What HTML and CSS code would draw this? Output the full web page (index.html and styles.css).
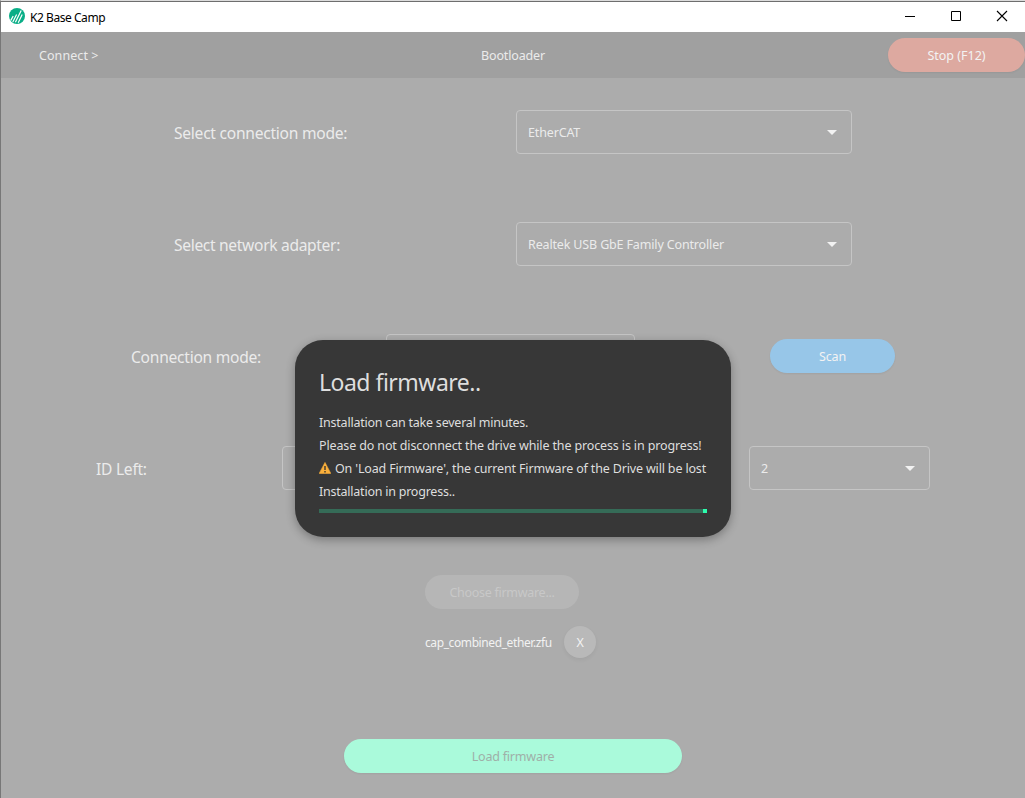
FILE: index.html
```html
<!DOCTYPE html>
<html lang="en">
<head>
<meta charset="utf-8">
<title>K2 Base Camp</title>
<link rel="stylesheet" href="styles.css">
</head>
<body>
<div class="window">
  <header class="titlebar">
    <svg class="logo" viewBox="0 0 16 16" width="16" height="16"><circle cx="8" cy="8" r="8" fill="#0aae87"/><path d="M1.8 12.4 4.2 8M3.8 14 7.6 6.4M6.4 14.2 12.2 2.4M9.2 14.8 13.2 6.6" stroke="#fff" stroke-width="1.2" fill="none"/></svg>
    <span class="app-name">K2 Base Camp</span>
    <div class="controls">
      <svg width="12" height="12" viewBox="0 0 12 12"><path d="M1 6.5H11" stroke="#000"/></svg>
      <svg width="12" height="12" viewBox="0 0 12 12"><path d="M1.5 1.5H10.5V10.5H1.5Z" fill="none" stroke="#000"/></svg>
      <svg width="12" height="12" viewBox="0 0 12 12"><path d="M1 1 11 11M11 1 1 11" stroke="#000" stroke-width="1.1"/></svg>
    </div>
  </header>
  <nav class="toolbar">
    <span class="crumb">Connect &gt;</span>
    <span class="page-name">Bootloader</span>
    <button class="btn stop">Stop (F12)</button>
  </nav>
  <main class="content">
    <div class="row row-wide">
      <label class="label mode">Select connection mode:</label>
      <div class="select"><span>EtherCAT</span><svg class="caret" width="10" height="5" viewBox="0 0 10 5"><path d="M0 0H10L5 5Z"/></svg></div>
    </div>
    <div class="row row-wide">
      <label class="label adapter">Select network adapter:</label>
      <div class="select"><span class="controller">Realtek USB GbE Family Controller</span><svg class="caret" width="10" height="5" viewBox="0 0 10 5"><path d="M0 0H10L5 5Z"/></svg></div>
    </div>
    <div class="row row-scan">
      <label class="label">Connection mode:</label>
      <div class="select"></div>
      <button class="btn scan">Scan</button>
    </div>
    <div class="row row-ids">
      <label class="label">ID Left:</label>
      <div class="select"></div>
      <div class="select"><span>2</span><svg class="caret" width="10" height="5" viewBox="0 0 10 5"><path d="M0 0H10L5 5Z"/></svg></div>
    </div>
    <div class="files">
      <button class="btn choose">Choose firmware...</button>
      <div class="file"><span class="file-name">cap_combined_ether.zfu</span><button class="btn remove">X</button></div>
    </div>
    <button class="btn load">Load firmware</button>
  </main>
  <section class="dialog">
    <h1 class="dialog-title">Load firmware..</h1>
    <p class="line"><span class="l1">Installation can take several minutes.</span></p>
    <p class="line"><span class="l2">Please do not disconnect the drive while the process is in progress!</span></p>
    <p class="line"><svg class="warn" width="12" height="12" viewBox="0 0 12 12"><path d="M6 .4 11.8 11.4H.2Z" fill="#fbb03b" stroke="#fbb03b" stroke-width=".6" stroke-linejoin="round"/><path d="M6 4V8M6 9V10.4" stroke="#2d2d2d" stroke-width="1.3"/></svg><span class="l3">On 'Load Firmware', the current Firmware of the Drive will be lost</span></p>
    <p class="line"><span class="l4">Installation in progress..</span></p>
    <div class="progress"><div class="progress-head"></div></div>
  </section>
</div>
</body>
</html>
```

FILE: styles.css
```css
* { box-sizing: border-box; }
body { margin: 0; font-family: "Noto Sans", "Open Sans", sans-serif; font-size: 12.5px; letter-spacing: -0.15px; color: #ebebeb; }
.window { position: relative; width: 1025px; height: 798px; overflow: hidden; display: flex; flex-direction: column; background: #acacac; border-left: 1px solid #777; border-top: 1px solid #dcdcdc; white-space: nowrap; }
.titlebar { height: 31px; flex: none; display: flex; align-items: center; background: #fff; border-top: 1px solid #6e6e6e; padding: 0 17px 2px 8px; color: #000; }
.app-name { margin: 2px 0 0 5px; font-size: 12px; letter-spacing: -0.45px; }
.controls { margin-left: auto; display: flex; gap: 34px; }
.controls svg { display: block; }
.toolbar { height: 46px; flex: none; display: grid; grid-template-columns: 442px 1fr 137px; align-items: center; background: #a0a0a0; padding-left: 38px; }
.crumb { letter-spacing: 0.08px; }
.btn { display: flex; align-items: center; justify-content: center; height: 34px; padding: 0; border: 0; border-radius: 17px; font: inherit; letter-spacing: inherit; color: #f3f3f3; box-shadow: 0 1px 2px rgba(0,0,0,.06); }
.stop { background: #dda9a0; letter-spacing: 0; }
.content { flex: 1; display: flex; flex-direction: column; align-items: flex-start; padding-top: 32px; }
.row { display: grid; align-items: center; height: 44px; margin-bottom: 68px; }
.row-wide { grid-template-columns: 342px 336px; padding-left: 173px; }
.row-scan { grid-template-columns: 255px 249px 135px 125px; padding-left: 130px; }
.row-scan .scan { grid-column: 4; }
.row-ids { grid-template-columns: 186px 181px 286px 181px; padding-left: 95px; }
.row-ids .select:last-child { grid-column: 4; }
.label { font-size: 15.6px; letter-spacing: -0.26px; padding-top: 1px; }
.adapter { letter-spacing: -0.33px; }
.select { height: 44px; border: 1px solid #c5c5c5; border-radius: 4px; padding: 0 14px 0 11px; display: flex; align-items: center; justify-content: space-between; }
.caret { fill: #f2f2f2; }
.scan { background: #97c6e8; }
.files { width: 171px; margin: 17px 0 0 424px; }
.choose { width: 154px; background: #b6b6b6; color: #c8c8c8; box-shadow: none; letter-spacing: -0.28px; }
.file { display: flex; align-items: center; justify-content: space-between; margin-top: 17px; color: #f2f2f2; }
.file-name { font-size: 12px; letter-spacing: -0.4px; padding-top: 1px; }
.remove { width: 32px; height: 32px; border-radius: 50%; background: #b9b9b9; box-shadow: 0 2px 4px rgba(0,0,0,.05); }
.load { width: 338px; margin: 81px 0 0 343px; background: #aafadb; color: #9fafa8; letter-spacing: -0.2px; }
.dialog { position: absolute; left: 294px; top: 339px; width: 436px; height: 197px; padding: 24px; border-radius: 28px; background: #373737; color: #dedede; box-shadow: 0 3px 10px rgba(0,0,0,.3); }
.dialog-title { margin: 0 0 11px; font-size: 23px; line-height: 36px; font-weight: 400; letter-spacing: -0.5px; }
.line { display: flex; align-items: center; margin: 0; height: 23px; }
.l1 { letter-spacing: -0.22px; }
.l2 { letter-spacing: -0.135px; }
.l3 { letter-spacing: -0.16px; }
.l4 { letter-spacing: -0.23px; }
.warn { flex: none; margin: -1px 4px 0 0; }
.progress { height: 4px; margin-top: 6px; background: #356b57; display: flex; justify-content: flex-end; width: 388px; }
.progress-head { width: 4px; background: #2dfcad; }
```
